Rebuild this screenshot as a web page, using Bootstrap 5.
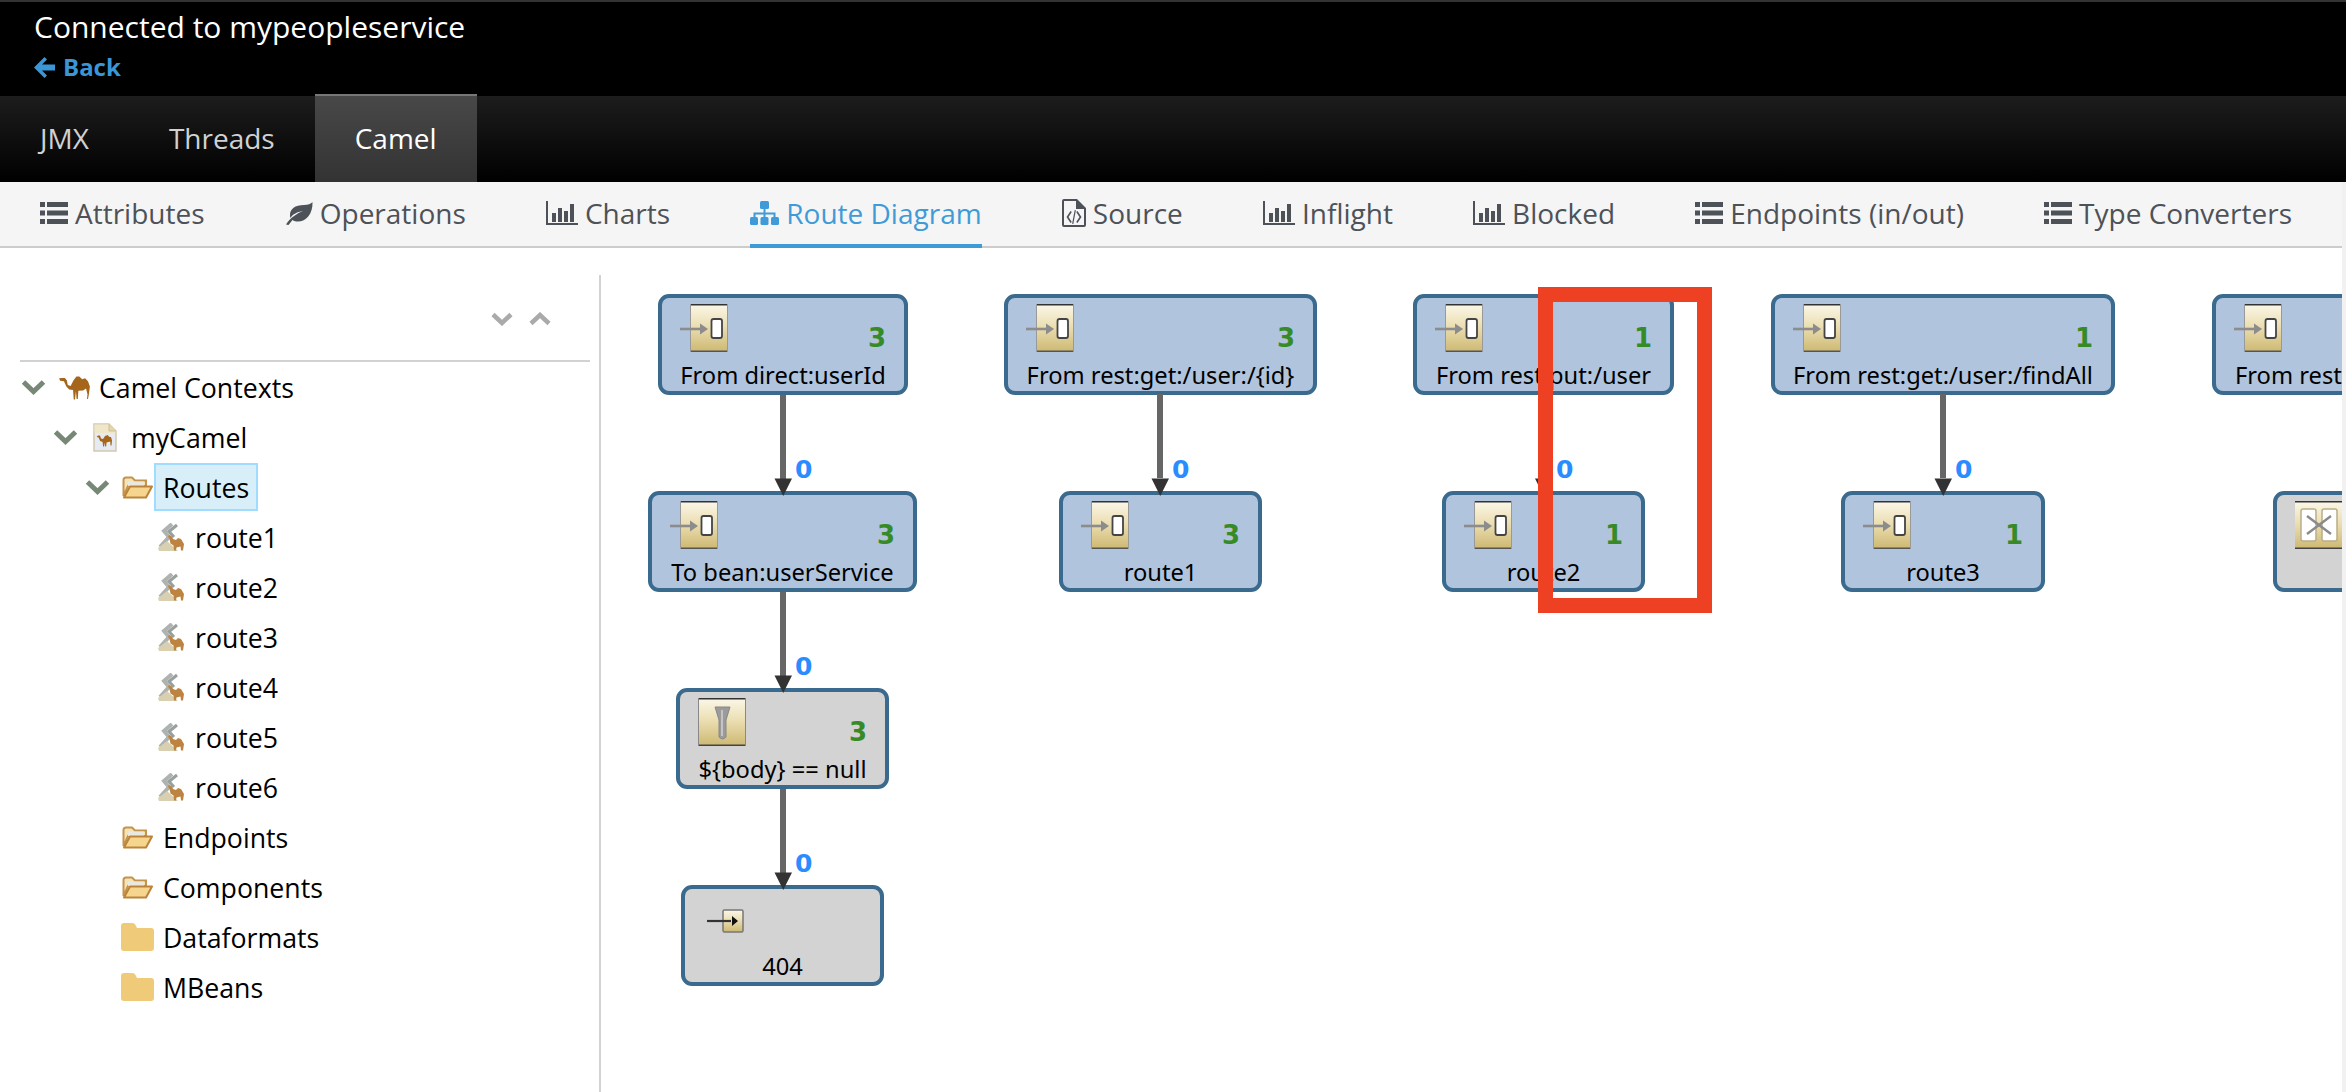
<!DOCTYPE html>
<html lang="en">
<head>
<meta charset="utf-8">
<title>Connected to mypeopleservice</title>
<link href="https://cdn.jsdelivr.net/npm/bootstrap@5.3.0/dist/css/bootstrap.min.css" rel="stylesheet">
<script src="https://cdn.jsdelivr.net/npm/bootstrap@5.3.0/dist/js/bootstrap.bundle.min.js"></script>
<style>
html,body{height:100%;}
body{width:2346px;height:1092px;overflow:hidden;background:#fff;font-family:"Open Sans","Liberation Sans",sans-serif;color:#000;}
.hdr{height:94px;background:#000;border-top:2px solid #333;padding:5px 0 0 34px;color:#fff;}
.hdr-title{font-size:30px;line-height:40px;}
.hdr-back{font-size:24px;line-height:32px;font-weight:700;color:#3a96d6;text-decoration:none;margin-top:4px;}
.topnav{height:88px;background:linear-gradient(#000 0,#000 2px,#1d1d1d 2px,#000 100%);}
.topnav .nav-link{height:88px;padding:0 40px;font-size:28px;color:#d1d1d1;display:flex;align-items:center;}
.topnav .nav-link.active{color:#fff;background:linear-gradient(#484848,#333);border-top:2px solid #777;padding-bottom:2px;}
.lower{height:910px;}
.contentarea{width:2342px;}
.strip{width:4px;background:#f1f1f1;}
.subtabs{height:66px;background:#f5f5f5;border-bottom:2px solid #ccc;padding-left:40px;gap:80.200px;}
.subtabs .nav-link{height:66px;padding:0 0 4px;font-size:28px;color:#4d5258;display:flex;align-items:center;gap:7px;}
.subtabs .nav-link.active{color:#3f9bd8;border-bottom:4px solid #3f9bd8;padding-bottom:0;}
.subtabs svg{fill:currentColor;flex:none;}
.main-split{height:844px;}
.treecol{width:601px;flex:none;margin-top:27px;border-right:2px solid #d2d2d2;}
.treehead{height:87px;margin:0 9px 0 20px;border-bottom:2px solid #d2d2d2;padding:37px 0 0 471px;gap:16px;}
.treerow{height:50px;font-size:26.7px;}
.lv0{padding-left:21px}.lv1{padding-left:53px}.lv2{padding-left:85px}.lv3{padding-left:117px}
.twist{width:32px;flex:none;}
.nodeicon{width:46px;flex:none;}
.ic-camel{margin-left:6px}.ic-file{margin-left:8px}.ic-open{margin-left:5px}.ic-route{margin-left:9px}.ic-closed{margin-left:4px}
.treelbl{height:48px;line-height:46px;margin-left:-9px;padding:0 7px;border:2px solid transparent;}
.treelbl.sel{background:#d8effa;border-color:#9fdcff;}
.canvasarea{position:relative;flex:1 1 auto;overflow:hidden;}
.flow{position:absolute;left:0;top:0;width:1741px;height:844px;}
.rnode{position:absolute;height:101px;border:4px solid #3a6a8e;border-radius:11px;display:flex;flex-direction:column;padding:6px 0 0;font-family:"Noto Sans","DejaVu Sans",sans-serif;}
.rnode.blue{background:#b0c4de;}
.rnode.grey{background:#d3d3d3;}
.r1{top:46px}.r2{top:243px}.r3{top:440px}.r4{top:637px}
.ntop{height:48px;display:flex;justify-content:space-between;padding:0 18px;}
.ncount{font-family:"DejaVu Sans",sans-serif;font-size:26px;font-weight:700;color:#378b27;line-height:30px;margin-top:19px;}
.nlabel{font-size:23.700px;line-height:30px;text-align:center;white-space:nowrap;margin-top:8px;}
.nlabel.clip{text-align:left;padding-left:19px;}
.elabel{position:absolute;font-family:"DejaVu Sans",sans-serif;font-size:25px;font-weight:700;color:#2a8cff;line-height:30px;}
.e1{top:207px}.e2{top:404px}.e3{top:601px}
.callout{position:absolute;left:937px;top:39px;width:174px;height:326px;border:15px solid #ee4023;}
</style>
</head>
<body>
<svg width="0" height="0" class="position-absolute">
<defs>
<linearGradient id="tile" x1="0" y1="0" x2="0" y2="1"><stop offset="0" stop-color="#fbf8ea"/><stop offset="0.45" stop-color="#ecdfb4"/><stop offset="1" stop-color="#cdb871"/></linearGradient>
<symbol id="ep" viewBox="0 0 48 48">
<rect x="10" y="0" width="38" height="48" fill="url(#tile)"/>
<rect x="10" y="0" width="38" height="1.5" fill="#333"/><rect x="10" y="46.5" width="38" height="1.5" fill="#555"/>
<rect x="10" y="0" width="1" height="48" fill="#999"/><rect x="47" y="0" width="1" height="48" fill="#999"/>
<path d="M0 25H22" stroke="#8c8c8c" stroke-width="2.600"/><path d="M20 19.500l8 5.500-8 5.500z" fill="#8c8c8c"/>
<rect x="31.5" y="15" width="10.5" height="19" rx="2" fill="#fff" stroke="#444" stroke-width="1.8"/>
</symbol>
<symbol id="flt" viewBox="0 0 48 48">
<rect width="48" height="48" fill="url(#tile)"/><rect width="48" height="1.5" fill="#333"/><rect y="46.5" width="48" height="1.5" fill="#444"/>
<rect width="1" height="48" fill="#888"/><rect x="47" width="1" height="48" fill="#888"/>
<path d="M17 9H32L28 22V39Q24.5 43 21 39V22Z" fill="#9b9b9b" stroke="#888"/><path d="M23 12h2v26h-2z" fill="#c4c4c4"/>
</symbol>
<symbol id="mc" viewBox="0 0 48 48">
<rect width="48" height="48" fill="url(#tile)"/><rect width="48" height="1.5" fill="#333"/><rect y="46.5" width="48" height="1.5" fill="#444"/>
<rect x="6" y="8" width="15" height="32" rx="2" fill="#fff" stroke="#b9ad8a" stroke-width="1.5"/><rect x="27" y="8" width="15" height="32" rx="2" fill="#fff" stroke="#b9ad8a" stroke-width="1.5"/>
<path d="M12 15L36 33M36 15L12 33" stroke="#8a8a8a" stroke-width="2.4"/>
</symbol>
<symbol id="ep2" viewBox="0 0 48 48">
<rect x="20" y="15" width="20" height="22" rx="1.5" fill="url(#tile)" stroke="#777" stroke-width="1.5"/>
<path d="M4 26H28" stroke="#333" stroke-width="2.200"/><path d="M29 21l6 5-6 5z" fill="#111"/>
</symbol>
<symbol id="camel" viewBox="0 0 32 26">
<path fill="#a5651a" d="M0 3.5L3 3L6 3.2L8 5.5L9 10.5L12 11.5L15 5.5L18 1.5L21 1.5L24 4.5L27 3.5L30 6.5L32 12L31 20L30 25L29 25L29.5 20L28 14L25 16L20 16.5L19.5 25L18.2 25L17.5 17L16.5 25.5L15.2 25.5L14.5 15.5L10.5 15L7.5 12L5 6.5L1 6Z"/>
</symbol>
<symbol id="file" viewBox="0 0 24 29">
<path d="M1 1H16L23 8V28H1Z" fill="#e6ebf3" stroke="#d3c8ae" stroke-width="1.5"/><path d="M1.5 1.5H16L22.5 8V10H1.5Z" fill="#f0e6c8"/><path d="M16 1V8H23" fill="#e4d6a8" stroke="#cdbf98"/>
<path fill="#a5651a" d="M5 12.5h2l1 3 2 .5 2-3 2.5-1 2 2 1.500 0 1 3.500-.5 5h-1l-.3-4-3.700 1-.3 4h-1l-.4-4-.7 4h-1l-.5-4.500-2.500-1-1.500-3.500-2-.5z"/>
</symbol>
<symbol id="fopen" viewBox="0 0 31 23">
<path d="M1.500 20V4Q1.500 1.500 4 1.500H10L13 4.500H24V10H6Z" fill="#f6e3b4" stroke="#c4934c" stroke-width="2"/>
<path d="M6 5.500H22V10H6Z" fill="#e9e9e2"/>
<path d="M2 21.500L8 10.500H30L24 21.500Z" fill="#f6d68e" stroke="#bb843a" stroke-width="2" stroke-linejoin="round"/>
</symbol>
<symbol id="fclosed" viewBox="0 0 33 28">
<path fill="#efcb79" d="M0 3Q0 0 3 0H11Q14 0 15 3L16 5H30Q33 5 33 8V25Q33 28 30 28H3Q0 28 0 25Z"/>
</symbol>
<symbol id="routeic" viewBox="0 0 27 28">
<path d="M14 1L6 8L11 14L2 24" fill="none" stroke="#aeb3b0" stroke-width="4"/><path d="M19 2L11 8.500L16 14" fill="none" stroke="#98a09e" stroke-width="3"/>
<path d="M0 25L9 18L20 28H1Z" fill="#d9d0b2"/>
<path fill="#bd8340" d="M11 12l3 1.500 1 2.500 3 1 2-2 3 1 3 5-1 6.500h-2l-.5-4-4 1-.5 3h-2l-.5-5-3-2-1-4.500-1.500-2.500z"/>
</symbol>
<symbol id="list" viewBox="0 0 28 22"><path d="M0 0h5v5H0zM7 0h21v5H7zM0 8.500h5v5H0zM7 8.500h21v5H7zM0 17h5v5H0zM7 17h21v5H7z"/></symbol>
<symbol id="leaf" viewBox="0 0 28 23"><path d="M27.500 0C26 2 23 3 19 3C10 3 5 7 5 13C5 14 5 15 5.500 16C8 12 12 10 18 9C12 11.500 6 15 1 22.500L3.500 23L7.500 18C9 19 11 19.500 13 19.500C21 19.500 28 12 27.500 0Z"/></symbol>
<symbol id="bars" viewBox="0 0 32 24"><path d="M0 0h2v22h30v2H0zM6 12h4v9H6zM12 7h4v14h-4zM18 10h4v11h-4zM24 3h4v18h-4z"/></symbol>
<symbol id="sitemap" viewBox="0 0 29 24"><rect x="10" y="0" width="9" height="8" rx="1.500"/><rect x="0" y="16" width="8" height="8" rx="1.500"/><rect x="10.500" y="16" width="8" height="8" rx="1.500"/><rect x="21" y="16" width="8" height="8" rx="1.500"/><path d="M13.500 8h2v3.500h10V16h-2v-2.500h-8V16h-2v-2.500h-8V16h-2v-4.500h10z"/></symbol>
<symbol id="fcode" viewBox="0 0 24 28"><path fill-rule="evenodd" d="M2 0H15L24 9V26Q24 28 22 28H2Q0 28 0 26V2Q0 0 2 0ZM2 2V26H22V10H14V2Z"/><path d="M8.500 12L4.500 18L8.500 24L9.800 23L6.500 18L9.800 13ZM15.500 12L19.500 18L15.500 24L14.200 23L17.500 18L14.200 13ZM12.700 11L13.900 11.300L11.300 25L10.100 24.700Z"/></symbol>
</defs>
</svg>

<header class="hdr d-flex flex-column align-items-start">
  <div class="hdr-title">Connected to mypeopleservice</div>
  <a href="#" class="hdr-back d-flex align-items-center gap-2">
    <svg width="21" height="21" viewBox="0 0 21 21" fill="#3a96d6"><path d="M10.500 0L13 2.500L8 7.500H21V13.500H8L13 18.500L10.500 21L0 10.500Z"/></svg>Back</a>
</header>

<nav class="nav topnav">
  <a class="nav-link" href="#">JMX</a>
  <a class="nav-link" href="#">Threads</a>
  <a class="nav-link active" href="#">Camel</a>
</nav>

<div class="lower d-flex">
  <div class="contentarea d-flex flex-column">
    <nav class="nav subtabs flex-nowrap">
      <a class="nav-link" href="#"><svg width="28" height="22"><use href="#list"/></svg>Attributes</a>
      <a class="nav-link" href="#"><svg width="28" height="23"><use href="#leaf"/></svg>Operations</a>
      <a class="nav-link" href="#"><svg width="32" height="24"><use href="#bars"/></svg>Charts</a>
      <a class="nav-link active" href="#"><svg width="29" height="24"><use href="#sitemap"/></svg>Route Diagram</a>
      <a class="nav-link" href="#"><svg width="24" height="28"><use href="#fcode"/></svg>Source</a>
      <a class="nav-link" href="#"><svg width="32" height="24"><use href="#bars"/></svg>Inflight</a>
      <a class="nav-link" href="#"><svg width="32" height="24"><use href="#bars"/></svg>Blocked</a>
      <a class="nav-link" href="#"><svg width="28" height="22"><use href="#list"/></svg>Endpoints (in/out)</a>
      <a class="nav-link" href="#"><svg width="28" height="22"><use href="#list"/></svg>Type Converters</a>
    </nav>

    <div class="main-split d-flex">
      <aside class="treecol">
        <div class="treehead d-flex align-items-start">
          <svg width="22" height="14" viewBox="0 0 22 14"><path d="M2 2.500L11 11L20 2.500" fill="none" stroke="#aaa" stroke-width="4.500"/></svg>
          <svg width="22" height="14" viewBox="0 0 22 14"><path d="M2 11.500L11 3L20 11.500" fill="none" stroke="#aaa" stroke-width="4.500"/></svg>
        </div>
        <div class="tree">
          <div class="treerow lv0 d-flex align-items-center">
            <span class="twist d-flex"><svg width="25" height="16" viewBox="0 0 25 16"><path d="M2.500 3L12.500 12.500L22.500 3" fill="none" stroke="#778877" stroke-width="5"/></svg></span>
            <span class="nodeicon d-flex"><svg class="ic-camel" width="31" height="25"><use href="#camel"/></svg></span>
            <span class="treelbl">Camel Contexts</span>
          </div>
          <div class="treerow lv1 d-flex align-items-center">
            <span class="twist d-flex"><svg width="25" height="16" viewBox="0 0 25 16"><path d="M2.500 3L12.500 12.500L22.500 3" fill="none" stroke="#778877" stroke-width="5"/></svg></span>
            <span class="nodeicon d-flex"><svg class="ic-file" width="24" height="29"><use href="#file"/></svg></span>
            <span class="treelbl">myCamel</span>
          </div>
          <div class="treerow lv2 d-flex align-items-center">
            <span class="twist d-flex"><svg width="25" height="16" viewBox="0 0 25 16"><path d="M2.500 3L12.500 12.500L22.500 3" fill="none" stroke="#778877" stroke-width="5"/></svg></span>
            <span class="nodeicon d-flex"><svg class="ic-open" width="31" height="23"><use href="#fopen"/></svg></span>
            <span class="treelbl sel">Routes</span>
          </div>
          <div class="treerow lv3 d-flex align-items-center"><span class="twist"></span><span class="nodeicon d-flex"><svg class="ic-route" width="27" height="28"><use href="#routeic"/></svg></span><span class="treelbl">route1</span></div>
          <div class="treerow lv3 d-flex align-items-center"><span class="twist"></span><span class="nodeicon d-flex"><svg class="ic-route" width="27" height="28"><use href="#routeic"/></svg></span><span class="treelbl">route2</span></div>
          <div class="treerow lv3 d-flex align-items-center"><span class="twist"></span><span class="nodeicon d-flex"><svg class="ic-route" width="27" height="28"><use href="#routeic"/></svg></span><span class="treelbl">route3</span></div>
          <div class="treerow lv3 d-flex align-items-center"><span class="twist"></span><span class="nodeicon d-flex"><svg class="ic-route" width="27" height="28"><use href="#routeic"/></svg></span><span class="treelbl">route4</span></div>
          <div class="treerow lv3 d-flex align-items-center"><span class="twist"></span><span class="nodeicon d-flex"><svg class="ic-route" width="27" height="28"><use href="#routeic"/></svg></span><span class="treelbl">route5</span></div>
          <div class="treerow lv3 d-flex align-items-center"><span class="twist"></span><span class="nodeicon d-flex"><svg class="ic-route" width="27" height="28"><use href="#routeic"/></svg></span><span class="treelbl">route6</span></div>
          <div class="treerow lv2 d-flex align-items-center"><span class="twist"></span><span class="nodeicon d-flex"><svg class="ic-open" width="31" height="23"><use href="#fopen"/></svg></span><span class="treelbl">Endpoints</span></div>
          <div class="treerow lv2 d-flex align-items-center"><span class="twist"></span><span class="nodeicon d-flex"><svg class="ic-open" width="31" height="23"><use href="#fopen"/></svg></span><span class="treelbl">Components</span></div>
          <div class="treerow lv2 d-flex align-items-center"><span class="twist"></span><span class="nodeicon d-flex"><svg class="ic-closed" width="33" height="28"><use href="#fclosed"/></svg></span><span class="treelbl">Dataformats</span></div>
          <div class="treerow lv2 d-flex align-items-center"><span class="twist"></span><span class="nodeicon d-flex"><svg class="ic-closed" width="33" height="28"><use href="#fclosed"/></svg></span><span class="treelbl">MBeans</span></div>
        </div>
      </aside>

      <section class="canvasarea">
        <div class="rnode blue r1" style="left:57px;width:250px"><div class="ntop"><svg width="48" height="48"><use href="#ep"/></svg><span class="ncount">3</span></div><div class="nlabel">From direct:userId</div></div>
        <div class="rnode blue r2" style="left:47px;width:269px"><div class="ntop"><svg width="48" height="48"><use href="#ep"/></svg><span class="ncount">3</span></div><div class="nlabel">To bean:userService</div></div>
        <div class="rnode grey r3" style="left:75px;width:213px"><div class="ntop"><svg width="48" height="48"><use href="#flt"/></svg><span class="ncount">3</span></div><div class="nlabel">${body} == null</div></div>
        <div class="rnode grey r4" style="left:80px;width:203px"><div class="ntop"><svg width="48" height="48"><use href="#ep2"/></svg></div><div class="nlabel">404</div></div>
        <div class="rnode blue r1" style="left:403px;width:313px"><div class="ntop"><svg width="48" height="48"><use href="#ep"/></svg><span class="ncount">3</span></div><div class="nlabel">From rest:get:/user:/{id}</div></div>
        <div class="rnode blue r2" style="left:458px;width:203px"><div class="ntop"><svg width="48" height="48"><use href="#ep"/></svg><span class="ncount">3</span></div><div class="nlabel">route1</div></div>
        <div class="rnode blue r1" style="left:812px;width:261px"><div class="ntop"><svg width="48" height="48"><use href="#ep"/></svg><span class="ncount">1</span></div><div class="nlabel">From rest:put:/user</div></div>
        <div class="rnode blue r2" style="left:841px;width:203px"><div class="ntop"><svg width="48" height="48"><use href="#ep"/></svg><span class="ncount">1</span></div><div class="nlabel">route2</div></div>
        <div class="rnode blue r1" style="left:1170px;width:344px"><div class="ntop"><svg width="48" height="48"><use href="#ep"/></svg><span class="ncount">1</span></div><div class="nlabel">From rest:get:/user:/findAll</div></div>
        <div class="rnode blue r2" style="left:1240px;width:204px"><div class="ntop"><svg width="48" height="48"><use href="#ep"/></svg><span class="ncount">1</span></div><div class="nlabel">route3</div></div>
        <div class="rnode blue r1" style="left:1611px;width:313px"><div class="ntop"><svg width="48" height="48"><use href="#ep"/></svg></div><div class="nlabel clip">From rest</div></div>
        <div class="rnode grey r2" style="left:1672px;width:203px"><div class="ntop"><svg width="48" height="48"><use href="#mc"/></svg></div></div>

        <svg class="flow" viewBox="601 248 1741 844">
          <g fill="#666">
            <rect x="780" y="395" width="6" height="84"/><rect x="780" y="592" width="6" height="84"/><rect x="780" y="789" width="6" height="84"/>
            <rect x="1157" y="394" width="6" height="84"/><rect x="1541" y="394" width="6" height="84"/><rect x="1940" y="394" width="6" height="84"/>
          </g>
          <g fill="#333">
            <path d="M774.500 478.500h17.500l-8.750 17.500z"/><path d="M774.500 675.500h17.500l-8.750 17.500z"/><path d="M774.500 872.500h17.500l-8.750 17.500z"/>
            <path d="M1151.500 478.500h17.500l-8.750 17.500z"/><path d="M1535 478.500h17.500l-8.750 17.500z"/><path d="M1934.500 478.500h17.500l-8.750 17.500z"/>
          </g>
        </svg>
        <span class="elabel e1" style="left:194px">0</span>
        <span class="elabel e2" style="left:194px">0</span>
        <span class="elabel e3" style="left:194px">0</span>
        <span class="elabel e1" style="left:571px">0</span>
        <span class="elabel e1" style="left:955px">0</span>
        <span class="elabel e1" style="left:1354px">0</span>
        <div class="callout"></div>
      </section>
    </div>
  </div>
  <div class="strip"></div>
</div>
</body>
</html>
